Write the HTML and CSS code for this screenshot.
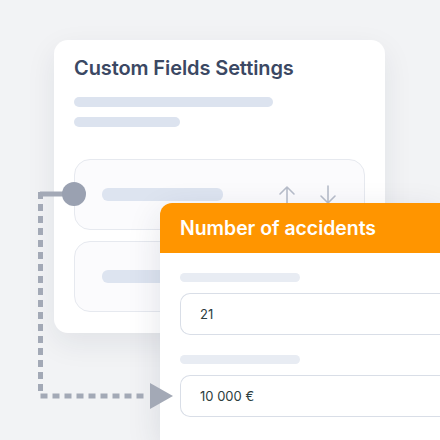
FILE: index.html
```html
<!DOCTYPE html>
<html lang="en">
<head>
    <meta charset="UTF-8">
    <title>Custom Fields</title>
    <link rel="stylesheet" href="styles.css">
</head>
<body>
    <div class="stage">
        <section class="settings">
            <h1>Custom Fields Settings</h1>
            <div class="bar bar-long"></div>
            <div class="bar bar-short"></div>
            <div class="row">
                <div class="bar row-bar"></div>
                <div class="arrows">
                    <svg width="20" height="22" viewBox="0 0 20 22"><path d="M10 20V3M3 10l7-7 7 7" /></svg>
                    <svg width="20" height="22" viewBox="0 0 20 22"><path d="M10 2v17M3 12l7 7 7-7" /></svg>
                </div>
            </div>
            <div class="row">
                <div class="bar row-bar"></div>
            </div>
        </section>

        <!-- popup card lies over the settings card -->
        <section class="field">
            <header>Number of accidents</header>
            <div class="field-body">
                <div class="bar label-bar"></div>
                <div class="input">21</div>
                <div class="bar label-bar"></div>
                <div class="input">10 000 €</div>
            </div>
        </section>

        <svg class="link" width="440" height="440" viewBox="0 0 440 440">
            <path class="dash" d="M40.5 192V396H148" />
            <path class="stub" d="M40 194H64" />
            <circle cx="74" cy="194" r="12" />
            <path class="tip" d="M150 383L173 396L150 409Z" />
        </svg>
    </div>
</body>
</html>
```

FILE: styles.css
```css
* {
    padding: 0;
    margin: 0;
    box-sizing: border-box;
}
body {
    background-color: #f2f3f5;
    font-family: Inter, "Open Sans", sans-serif;
    width: 440px;
    height: 440px;
    overflow: hidden;
}
.stage {
    position: relative;
    height: 440px;
    overflow: hidden;
    padding: 40px 0 0 54px;
}
.bar {
    border-radius: 6px;
    background-color: #dce3ef;
}
.settings {
    width: 331px;
    height: 293px;
    background-color: #fff;
    border-radius: 14px;
    box-shadow: 0 10px 30px rgba(30, 40, 70, 0.08);
    padding: 16px 20px 0;
}
.settings h1 {
    font-size: 20px;
    line-height: 24px;
    font-weight: 600;
    color: #3b4863;
    letter-spacing: -0.1px;
}
.bar-long {
    width: 199px;
    height: 10px;
    margin-top: 17px;
}
.bar-short {
    width: 106px;
    height: 10px;
    margin-top: 10px;
}
.row {
    height: 71px;
    margin-top: 32px;
    border: 1px solid #e6e9ef;
    border-radius: 16px;
    background-color: #fbfbfd;
    padding-left: 27px;
    display: flex;
    align-items: center;
}
.row + .row {
    margin-top: 11px;
}
.row-bar {
    width: 121px;
    height: 13px;
    background-color: #dde4f0;
}
.arrows {
    display: flex;
    gap: 21px;
    margin-left: 54px;
}
.arrows path {
    fill: none;
    stroke: #b7bdca;
    stroke-width: 1.6;
    stroke-linecap: round;
    stroke-linejoin: round;
}
.field {
    position: absolute;
    left: 160px;
    top: 203px;
    width: 280px;
    height: 237px;
    background-color: #fff;
    border-radius: 12px 0 0 0;
    box-shadow: 0 10px 34px rgba(30, 40, 70, 0.12);
    overflow: hidden;
}
.field header {
    height: 50px;
    background-color: #ff9500;
    color: #fff;
    font-size: 19.4px;
    font-weight: 600;
    line-height: 50px;
    padding-left: 20px;
}
.field-body {
    padding: 20px 0 0 20px;
}
.label-bar {
    width: 120px;
    height: 9px;
    background-color: #e8ecf3;
}
.input {
    height: 42px;
    margin-top: 11px;
    margin-bottom: 20px;
    border: 1px solid #d9dee7;
    border-right: 0;
    border-radius: 10px 0 0 10px;
    padding-left: 19px;
    font-size: 13px;
    line-height: 40px;
    color: #2c3d3d;
}
.link {
    position: absolute;
    left: 0;
    top: 0;
}
.link .dash {
    fill: none;
    stroke: #a3a9b6;
    stroke-width: 5;
    stroke-dasharray: 7 5;
}
.link .stub {
    stroke: #a3a9b6;
    stroke-width: 5;
}
.link circle {
    fill: #9aa1b1;
}
.link .tip {
    fill: #a3a9b6;
}
```
